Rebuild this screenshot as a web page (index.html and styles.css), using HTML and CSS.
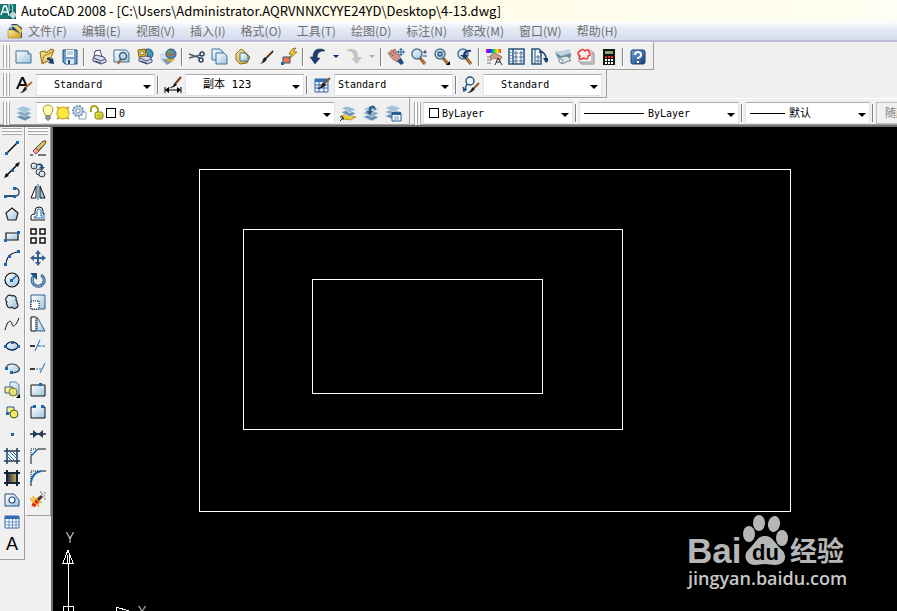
FILE: index.html
```html
<!DOCTYPE html>
<html lang="zh-CN">
<head>
<meta charset="utf-8">
<title>AutoCAD 2008</title>
<link rel="stylesheet" href="styles.css">
</head>
<body>
<svg class="defs" aria-hidden="true">
  <defs>
    <linearGradient id="paper" x1="0" y1="0" x2="1" y2="1"><stop offset="0" stop-color="#fff"/><stop offset="1" stop-color="#9cc4dc"/></linearGradient>
    <linearGradient id="blue" x1="0" y1="0" x2="1" y2="1"><stop offset="0" stop-color="#6fa4d8"/><stop offset="1" stop-color="#123f78"/></linearGradient>
    <linearGradient id="gold" x1="0" y1="0" x2="1" y2="1"><stop offset="0" stop-color="#fff0a0"/><stop offset="1" stop-color="#c79a1c"/></linearGradient>
    <linearGradient id="rainbow"><stop offset="0" stop-color="#f0f"/><stop offset=".25" stop-color="#22f"/><stop offset=".5" stop-color="#0c6"/><stop offset=".75" stop-color="#fe0"/><stop offset="1" stop-color="#f22"/></linearGradient>
    <linearGradient id="dusk"><stop offset="0" stop-color="#20264a"/><stop offset="1" stop-color="#c8b458"/></linearGradient>
    <g id="brush"><path d="M16 3 9 10" stroke="#3a2412" stroke-width="2"/><path d="M15 3 9 9" stroke="#c98a55"/><path d="M8 9 10 11Q8 15 3 16Q6 14 6 11Z" fill="#222"/></g>
    <g id="lens"><path d="M10 10 15 16" stroke="#8a5524" stroke-width="3"/><path d="M11 11 15 16" stroke="#d89a58"/><circle cx="7" cy="6" r="5" fill="url(#paper)" stroke="#54718c" stroke-width="1.5"/></g>
    <g id="printer"><path d="M4 9 5 3 10 2 12 9" fill="#fff" stroke="#444b70"/><path d="M3 10 6 7 14 9 16 12V14L11 16 3 13Z" fill="#d6daec" stroke="#444b70"/><path d="M4 10 11 13 15 11M5 13 11 15" fill="none" stroke="#444b70"/></g>
    <g id="globe"><circle cx="12" cy="6" r="5" fill="#3b8ed0" stroke="#245680"/><path d="M9 3Q12 1 13 4L11 6 12 9Q9 9 8 6ZM14 6 16 5 15 8Z" fill="#63b84c"/></g>
    <g id="stack"><path d="M1 13 8 10 17 13 10 17Z" fill="#6d8fae" stroke="#e8f0f6" stroke-width=".6"/><path d="M1 9 8 6 17 9 10 13Z" fill="#84a7c2" stroke="#e8f0f6" stroke-width=".6"/><path d="M1 5 8 2 17 5 10 9Z" fill="#a4c4da" stroke="#e8f0f6" stroke-width=".6"/></g>
    <g id="sheets"><path d="M1 1H9L12 4V12H1Z" fill="url(#paper)" stroke="#39759c"/></g>
    <g id="block"><path d="M6 0H12L15 3V13H6Z" fill="url(#paper)" stroke="#5d83a7"/><path d="M1 5H9V11H1Z" fill="#fff080" stroke="#2a5fa0"/><circle cx="9" cy="10" r="4" fill="#f4e860" fill-opacity=".8" stroke="#7b7630"/></g>
    <path id="down" d="M0 0H8L4 4Z"/>
  </defs>
</svg>
<div class="app">
  <header class="title">
    <svg class="logo" width="16" height="16" viewBox="0 0 16 16"><path d="M0 1H16V16H0Z" fill="#16766f"/><path d="M1 12 4 3H6L9 12M3 9H8" fill="none" stroke="#fff" stroke-width="1.500"/><path d="M9 1V9M11 1Q14 3 12 8" fill="none" stroke="#bfe4df"/><path d="M9 8H16V16H9Z" fill="#0d5d5c"/><path d="M8 12H16M13 8V16" stroke="#fff"/><path d="M11 10H15V14H11Z" fill="none" stroke="#fff"/></svg>
    <h1>AutoCAD 2008 - [C:\Users\Administrator.AQRVNNXCYYE24YD\Desktop\4-13.dwg]</h1>
  </header>
  <nav class="menu">
    <svg width="16" height="16" viewBox="0 0 16 16"><path d="M2 6 4 1H10L15 5V15H1Z" fill="#254a78"/><path d="M1 7 6 7 14 11V15H1Z" fill="url(#gold)" stroke="#a8801c" stroke-width=".6"/><path d="M6 3 10 2 15 7 14 11Z" fill="#f1cf50"/><path d="M1 3H8M4 0V6" stroke="#fff"/></svg>
    <a href="#">文件(F)</a><a href="#">编辑(E)</a><a href="#">视图(V)</a><a href="#">插入(I)</a><a href="#">格式(O)</a><a href="#">工具(T)</a><a href="#">绘图(D)</a><a href="#">标注(N)</a><a href="#">修改(M)</a><a href="#">窗口(W)</a><a href="#">帮助(H)</a>
  </nav>

  <div class="row">
    <div class="bar">
      <i class="grip"></i>
      <button aria-label="新建"><svg viewBox="0 0 18 18"><path d="M1 3H13L16 6V15H1Z" fill="url(#paper)" stroke="#3f7190"/><path d="M13 3V6H16" fill="#fff" stroke="#3f7190"/></svg></button>
      <button aria-label="打开"><svg viewBox="0 0 18 18"><path d="M2 4 7 3 8 5 13 1 16 2 12 12 4 16Z" fill="url(#gold)" stroke="#8f7020"/><path d="M6 8 15 4 12 12 4 15Z" fill="#f4d878" stroke="#a4842c"/><path d="M9 10Q12 8 13 11L15 10 16 16 10 15 12 13Q11 11 9 12Z" fill="#1d3d6c"/></svg></button>
      <button aria-label="保存"><svg viewBox="0 0 18 18"><path d="M2 2H16V16H4L2 14Z" fill="#6f9cc8" stroke="#234f7c"/><path d="M5 2H13V9H5Z" fill="#f4f8ff"/><path d="M6 4H12M6 6H12" stroke="#9ab"/><path d="M5 11H13V16H5Z" fill="#dce4ec"/><path d="M7 12H9V16H7Z" fill="#234f7c"/></svg></button>
      <i class="sep"></i>
      <button aria-label="打印"><svg viewBox="0 0 18 18"><use href="#printer"/></svg></button>
      <button aria-label="打印预览"><svg viewBox="0 0 18 18"><path d="M1 2H13L16 5V14H1Z" fill="url(#paper)" stroke="#3f7190"/><path d="M8 11 5 16" stroke="#a85c28" stroke-width="2"/><circle cx="10" cy="8" r="3.500" fill="#bddcf0" stroke="#40617e" stroke-width="1.500"/></svg></button>
      <button aria-label="发布"><svg viewBox="0 0 18 18"><use href="#globe"/><use href="#printer"/><path d="M2 2 9 1 10 8 3 9Z" fill="#f3c331" stroke="#845f12"/><circle cx="6" cy="5" r="2" fill="#fff3b0" stroke="#775"/></svg></button>
      <button aria-label="三维 DWF"><svg viewBox="0 0 18 18"><path d="M1 6 8 3 12 13 7 16 1 12Z" fill="#d4ddea"/><path d="M3 11 12 11 14 13 8 17Z" fill="#8296b0"/><use href="#globe"/><path d="M7 6Q12 8 17 6M12 1Q9 6 12 11" fill="none" stroke="#d44b32"/><path d="M8 11Q12 14 15 11" fill="none" stroke="#e5b425" stroke-width="2"/></svg></button>
      <i class="sep"></i>
      <button aria-label="剪切"><svg viewBox="0 0 18 18"><path d="M1 6 12 10M1 10 12 7" stroke="#506078" stroke-width="1.500"/><circle cx="14" cy="6" r="2" fill="none" stroke="#2b3d60" stroke-width="1.500"/><circle cx="13" cy="12" r="2" fill="none" stroke="#2b3d60" stroke-width="1.500"/></svg></button>
      <button aria-label="复制"><svg viewBox="0 0 18 18"><use href="#sheets"/><use href="#sheets" x="4" y="4"/></svg></button>
      <button aria-label="粘贴"><svg viewBox="0 0 18 18"><path d="M2 6 5 3 7 1 10 3 16 9 13 15 6 16 2 12Z" fill="url(#gold)" stroke="#8c701e"/><path d="M6 5H11L14 8V13H6Z" fill="url(#paper)" stroke="#456f92"/></svg></button>
      <button aria-label="特性匹配"><svg viewBox="0 0 18 18"><use href="#brush"/></svg></button>
      <button aria-label="块编辑器"><svg viewBox="0 0 18 18"><path d="M3 9H10V15H3Z" fill="#ef7d4c" stroke="#344c7b"/><path d="M12 1 16 0 13 4H17L9 11 12 6H9Z" fill="#ffd429" stroke="#73521a" stroke-width=".7"/><path d="M1 14H4V17H1Z" fill="#1769b0"/></svg></button>
      <i class="sep"></i>
      <button aria-label="放弃"><svg viewBox="0 0 18 18"><path d="M16 3Q8 2 8 10H11L6 16 1 9H4Q4 0 12 1Q15 1 16 3Z" fill="#1e3d6e" stroke="#132c50" stroke-width=".5"/></svg></button>
      <button class="drop" aria-label="放弃列表"><svg viewBox="0 0 8 4"><path d="M1 0H7L4 3Z" fill="#14148c"/></svg></button>
      <button aria-label="重做"><svg viewBox="0 0 18 18"><path d="M1 3Q9 2 9 10H6L12 16 17 9H13Q13 0 5 1Q2 1 1 3Z" fill="#c4c4c4"/></svg></button>
      <button class="drop" aria-label="重做列表"><svg viewBox="0 0 8 4"><path d="M1 0H7L4 3Z" fill="#aaaabc"/></svg></button>
      <i class="sep"></i>
      <button aria-label="实时平移"><svg viewBox="0 0 18 18"><path d="M1 5 2 4 6 8 3 3 5 2 8 6 6 2 8 1 11 7 12 6 14 12 10 14Q4 11 1 5Z" fill="#d19486" stroke="#93574d" stroke-width=".7"/><path d="M10 13 14 10 17 15 14 17Z" fill="#214d83"/><path d="M14 1V7M11 4H17" stroke="#2d639a"/><path d="M14 0 16 2H12ZM14 8 16 6H12ZM10 4 12 2V6ZM18 4 16 2V6Z" fill="#2d639a"/></svg></button>
      <button aria-label="实时缩放"><svg viewBox="0 0 18 18"><use href="#lens"/><path d="M13 4H17M15 2V6M13 8H17" stroke="#1c467a"/></svg></button>
      <button aria-label="窗口缩放"><svg viewBox="0 0 18 18"><use href="#lens"/><path d="M5 4H9V8H5Z" fill="#88b6dd" stroke="#163f70"/><path d="M17 13V17H13Z" fill="#000"/></svg></button>
      <button aria-label="缩放上一个"><svg viewBox="0 0 18 18"><use href="#lens"/><path d="M15 2Q8 1 7 7H4L9 11 12 7H10Q10 3 15 4Z" fill="#1d416e"/></svg></button>
      <i class="sep"></i>
      <button aria-label="特性"><svg viewBox="0 0 18 18"><path d="M1 1H16V5H1Z" fill="url(#rainbow)"/><path d="M5 8Q8 4 12 6L17 9 15 12 9 10 6 12Z" fill="#d4a08c" stroke="#844e42" stroke-width=".7"/><path d="M2 9H6M2 12H6M2 15H6" stroke="#777"/><path d="M10 17 13 10 17 17M11 14H16" fill="none" stroke="#333"/></svg></button>
      <button aria-label="设计中心"><svg viewBox="0 0 18 18"><path d="M1 1H16V16H1Z" fill="#eef4fa" stroke="#27537e" stroke-width="1.500"/><path d="M5 1V16" stroke="#27537e" stroke-width="1.500"/><path d="M3 4V5M3 7V8M3 10V11M3 13V14" stroke="#27537e"/><path d="M7 4H9V6H7ZM12 4H14V6H12ZM7 8H9V10H7ZM12 8H14V10H12ZM7 12H9V14H7ZM12 12H14V14H12Z" fill="#ffe48a" stroke="#52739b"/></svg></button>
      <button aria-label="工具选项板"><svg viewBox="0 0 18 18"><path d="M1 1H8L10 3V16H1Z" fill="#eef4fa" stroke="#27537e" stroke-width="1.500"/><path d="M4 1V16" stroke="#27537e"/><path d="M6 8H8V10H6ZM6 12H8V14H6Z" fill="#ffe48a" stroke="#52739b"/><path d="M8 4Q14 3 15 10" fill="none" stroke="#173c67" stroke-width="1.500"/><path d="M12 10H17V13L15 15Z" fill="#173c67"/></svg></button>
      <button aria-label="图纸集管理器"><svg viewBox="0 0 18 18"><path d="M1 3 8 3 16 1 17 14 8 13Z" fill="#bed5df"/><path d="M1 4 7 8 17 5V9L8 12 3 9Z" fill="#71909e"/><path d="M4 10 13 8 17 12 8 16Z" fill="#dbe5e8" stroke="#778c96"/><circle cx="7" cy="13" r="2" fill="#f0f5f7" stroke="#778c96"/></svg></button>
      <button aria-label="标记集管理器"><svg viewBox="0 0 18 18"><path d="M4 5H17V16H4Z" fill="#ddd" stroke="#888"/><path d="M2 3H15V14H2Z" fill="#f5f5f5" stroke="#999"/><path d="M3 3Q6 0 8 3Q12 0 12 4Q15 7 11 8Q11 13 7 10Q1 13 3 8Q-1 5 3 3Z" fill="#ffecec" stroke="#e83535" stroke-width="1.500"/></svg></button>
      <button aria-label="计算器"><svg viewBox="0 0 18 18"><path d="M3 1H15V17H3Z" fill="#101510"/><path d="M5 3H13V6H5Z" fill="#86a678"/><path d="M5 9H13" stroke="#e22" stroke-width="2" stroke-dasharray="2 1"/><path d="M5 12H13M5 15H13" stroke="#fff" stroke-width="2" stroke-dasharray="2 1"/></svg></button>
      <i class="sep"></i>
      <button aria-label="帮助"><svg viewBox="0 0 18 18"><rect x="2" y="2" width="14" height="14" rx="2" fill="url(#blue)" stroke="#123f78"/><path d="M6 7Q6 4 9 4T12 7Q12 9 9 10V11M9 13V15" fill="none" stroke="#fff" stroke-width="2"/></svg></button>
    </div>
  </div>

  <div class="row">
    <div class="bar">
      <i class="grip"></i>
      <button aria-label="文字样式"><svg viewBox="0 0 18 18"><path d="M2 13 7 2H8L12 11M4 9H10" fill="none" stroke="#111" stroke-width="2"/><path d="M17 6 10 12" stroke="#b36a38" stroke-width="2"/><path d="M10 11 12 13Q9 17 5 17Q8 15 9 12Z" fill="#222"/></svg></button>
      <div class="combo text-style"><select aria-label="文字样式"><option>Standard</option></select><svg><use href="#down"/></svg></div>
      <i class="sep"></i>
      <button aria-label="标注样式"><svg viewBox="0 0 18 18"><path d="M1 11V17M17 11V17M2 14H16" stroke="#000"/><path d="M1 14 5 11V17ZM17 14 13 11V17Z" fill="#000"/><path d="M17 1 11 8" stroke="#6b3e1d" stroke-width="2"/><path d="M11 7 13 9Q8 13 4 12Q9 11 10 8Z" fill="#111"/></svg></button>
      <div class="combo text-style cjk"><select aria-label="标注样式"><option>副本 123</option></select><svg><use href="#down"/></svg></div>
      <i class="sep"></i>
      <button aria-label="表格样式"><svg viewBox="0 0 18 18"><path d="M2 3H15V16H2Z" fill="#e9f1fb" stroke="#3968a7"/><path d="M2 3H15V6H2Z" fill="#356db7"/><path d="M2 9H15M2 12H15M6 6V16M11 6V16" stroke="#3968a7"/><path d="M17 2 11 8" stroke="#83512c" stroke-width="2"/><path d="M10 6 13 9Q9 13 4 13Q8 11 9 8Z" fill="#222"/></svg></button>
      <div class="combo"><select aria-label="表格样式"><option>Standard</option></select><svg><use href="#down"/></svg></div>
      <i class="sep"></i>
      <button aria-label="多重引线样式"><svg viewBox="0 0 18 18"><circle cx="8" cy="5" r="4" fill="#edf5fa" stroke="#26547f" stroke-width="1.500"/><path d="M5 8 2 15M1 11 2 15 5 13" fill="none" stroke="#26547f" stroke-width="1.500"/><path d="M17 7 12 12" stroke="#8b542c" stroke-width="2"/><path d="M11 11 13 13Q10 17 5 17Q9 15 10 12Z" fill="#222"/></svg></button>
      <div class="combo text-style"><select aria-label="多重引线样式"><option>Standard</option></select><svg><use href="#down"/></svg></div>
    </div>
  </div>

  <div class="row last">
    <div class="bar">
      <i class="grip"></i>
      <button aria-label="图层特性"><svg viewBox="0 0 18 18"><use href="#stack"/></svg></button>
      <div class="combo layers">
        <span class="states">
          <svg width="12" height="18" viewBox="0 0 12 18"><path d="M4 12Q1 8 1 6Q1 1 6 1T11 6Q11 8 8 12Z" fill="#fffbb0" stroke="#a39a35"/><path d="M4 12H8V15H4ZM5 16H7" fill="#aaa" stroke="#5c6475"/></svg>
          <svg width="16" height="18" viewBox="0 0 16 18"><path d="M2 3 5 5M14 3 11 5M2 15 5 13M14 15 11 13" stroke="#c89b20" stroke-width="2"/><circle cx="8" cy="9" r="6" fill="#ffe83a" stroke="#b7952b"/></svg>
          <svg width="16" height="18" viewBox="0 0 16 18"><path d="M7 8H14V15H7Z" fill="#fff" stroke="#8da0ba"/><circle cx="6" cy="7" r="5" fill="#c5d7e8" stroke="#7896b4" stroke-dasharray="2 1" stroke-width="2"/><circle cx="6" cy="7" r="2" fill="#fff" stroke="#7896b4"/></svg>
          <svg width="16" height="18" viewBox="0 0 16 18"><path d="M2 8V5Q2 2 5 2T9 5V10" fill="none" stroke="#a8a524" stroke-width="2"/><rect x="6" y="8" width="8" height="7" rx="2" fill="#e7e03b" stroke="#807e1c"/><path d="M8 11H13M8 13H13" stroke="#aaa525"/></svg>
          <b class="swatch"></b>
        </span>
        <select aria-label="图层"><option>0</option></select><svg class="arrow"><use href="#down"/></svg>
      </div>
      <button aria-label="将对象的图层置为当前"><svg viewBox="0 0 18 18"><path d="M2 12 8 10 17 13 11 16 5 15Z" fill="#f2cd25" stroke="#9b7b18" stroke-width=".7"/><path d="M2 8 8 6 17 9 11 13Z" fill="#6f91b0" stroke="#fff" stroke-width=".5"/><path d="M2 4 8 2 17 5 11 9Z" fill="#9bc0d4" stroke="#fff" stroke-width=".5"/><path d="M1 17 4 14M1 13H4V16" fill="none" stroke="#123"/></svg></button>
      <button aria-label="上一个图层"><svg viewBox="0 0 18 18"><use href="#stack"/><path d="M14 6Q13 0 9 2Q6 3 7 7H4L8 11 11 7H9Q9 4 11 4Q12 5 14 6Z" fill="#315b86"/></svg></button>
      <button aria-label="图层状态管理器"><svg viewBox="0 0 18 18"><use href="#stack" x="-1" y="-1"/><path d="M7 9H16V17H7Z" fill="#f7fbff" stroke="#245e98"/><path d="M7 8H16V11H7Z" fill="#245e98"/><path d="M9 13H14M9 15H14" stroke="#779cbd"/></svg></button>
    </div>
    <div class="bar open">
      <i class="grip"></i>
      <div class="combo color"><span class="states"><b class="swatch"></b></span><select aria-label="颜色"><option>ByLayer</option></select><svg class="arrow"><use href="#down"/></svg></div>
      <i class="sep"></i>
      <div class="combo linetype"><i class="stroke"></i><select aria-label="线型"><option>ByLayer</option></select><svg><use href="#down"/></svg></div>
      <i class="sep"></i>
      <div class="combo weight cjk"><i class="stroke"></i><select aria-label="线宽"><option>默认</option></select><svg><use href="#down"/></svg></div>
      <i class="sep"></i>
      <div class="combo plot cjk"><select aria-label="打印样式" disabled><option>随颜色</option></select></div>
    </div>
  </div>

  <main class="work">
    <aside class="side">
      <i class="grip"></i>
      <button aria-label="直线"><svg viewBox="0 0 16 16"><path d="M2 14 14 2" stroke="#000" stroke-width="1.500"/><path d="M1 12H4V15H1ZM12 1H15V4H12Z" fill="#1768b4"/></svg></button>
      <button aria-label="构造线"><svg viewBox="0 0 16 16"><path d="M2 14 14 2" stroke="#000" stroke-width="1.500"/><path d="M0 16 2 11 5 14ZM16 0 11 2 14 5Z" fill="#111"/><path d="M7 7H10V10H7Z" fill="#1768b4"/></svg></button>
      <button aria-label="多段线"><svg viewBox="0 0 16 16"><path d="M2 12H11" stroke="#111" stroke-width="1.500"/><path d="M10 4Q15 4 15 8T11 12" fill="none" stroke="#345774" stroke-width="1.500"/><path d="M0 11H3V14H0ZM9 11H12V14H9ZM9 3H12V6H9Z" fill="#1768b4"/></svg></button>
      <button aria-label="正多边形"><svg viewBox="0 0 16 16"><path d="M8 2 14 7 12 14H4L2 7Z" fill="url(#paper)" stroke="#222" stroke-width="1.200"/></svg></button>
      <button aria-label="矩形"><svg viewBox="0 0 16 16"><path d="M2 5H14V12H2Z" fill="url(#paper)" stroke="#111" stroke-width="1.200"/><path d="M0 11H3V14H0ZM13 3H16V6H13Z" fill="#1768b4"/></svg></button>
      <button aria-label="圆弧"><svg viewBox="0 0 16 16"><path d="M2 14Q3 3 14 2" fill="none" stroke="#223" stroke-width="1.200"/><path d="M0 13H3V16H0ZM4 5H7V8H4ZM13 0H16V3H13Z" fill="#1768b4"/></svg></button>
      <button aria-label="圆"><svg viewBox="0 0 16 16"><circle cx="8" cy="8" r="7" fill="url(#paper)" stroke="#111" stroke-width="1.200"/><path d="M8 8 13 3" stroke="#1768b4" stroke-width="1.500"/><path d="M6 7H9V10H6Z" fill="#1768b4"/></svg></button>
      <button aria-label="修订云线"><svg viewBox="0 0 16 16"><path d="M3 8A3 3 0 0 1 3 3A3 3 0 0 1 8 2A3 3 0 0 1 12 6A3 3 0 0 1 13 9A3 3 0 0 1 12 14A3 3 0 0 1 8 13A3 3 0 0 1 3 11A2 2 0 0 1 3 8Z" fill="url(#paper)" stroke="#223" stroke-width="1.200"/></svg></button>
      <button aria-label="样条曲线"><svg viewBox="0 0 16 16"><path d="M1 14C4 3 7 4 8 8S12 10 15 2" fill="none" stroke="#111"/></svg></button>
      <button aria-label="椭圆"><svg viewBox="0 0 16 16"><ellipse cx="8" cy="8" rx="6" ry="4" fill="url(#paper)" stroke="#111" stroke-width="1.200"/><path d="M0 7H3V10H0ZM13 7H16V10H13ZM7 3H10V6H7ZM7 11H10V13H7Z" fill="#1768b4"/></svg></button>
      <button aria-label="椭圆弧"><svg viewBox="0 0 16 16"><path d="M2 8Q3 4 8 4T15 8 8 13" fill="url(#paper)" stroke="#345" stroke-width="1.200"/><path d="M1 7H4V10H1ZM6 11H9V14H6Z" fill="#1768b4"/></svg></button>
      <button aria-label="插入块"><svg viewBox="0 0 16 16"><use href="#block"/><path d="M16 12V16H12Z"/></svg></button>
      <button aria-label="创建块"><svg viewBox="0 0 16 16"><path d="M3 3H10V9H3Z" fill="#fff080" stroke="#205a9c"/><circle cx="10" cy="10" r="4" fill="#f4e860" stroke="#555426"/><path d="M2 8H5V11H2Z" fill="#1768b4"/></svg></button>
      <button aria-label="点"><svg viewBox="0 0 16 16"><path d="M7 7H10V10H7Z" fill="#1768b4"/></svg></button>
      <button aria-label="图案填充"><svg viewBox="0 0 16 16"><path d="M3 3H13V13H3Z" fill="#fff"/><path d="M4 6 10 12M4 9 8 13M6 4 12 10M9 4 13 8" stroke="#267ab6"/><path d="M0 3H16M0 13H16M3 0V16M13 0V16" stroke="#203b59" stroke-width="1.500"/></svg></button>
      <button aria-label="渐变色"><svg viewBox="0 0 16 16"><path d="M3 3H13V13H3Z" fill="url(#dusk)"/><path d="M0 3H16M0 13H16M3 0V16M13 0V16" stroke="#182536" stroke-width="2"/></svg></button>
      <button aria-label="面域"><svg viewBox="0 0 16 16"><path d="M1 2H10L15 8V14H1Z" fill="url(#paper)" stroke="#244f80"/><circle cx="8" cy="8" r="3" fill="#fff" stroke="#244f80" stroke-width="1.200"/></svg></button>
      <button aria-label="表格"><svg viewBox="0 0 16 16"><path d="M1 2H15V14H1Z" fill="#fff" stroke="#3968a7"/><path d="M1 2H15V5H1Z" fill="#376cb2"/><path d="M1 8H15M1 11H15M5 5V14M8.500 5V14M12 5V14" stroke="#6a91c4"/></svg></button>
      <button class="letter" aria-label="多行文字">A</button>
    </aside>
    <aside class="side">
      <i class="grip"></i>
      <button aria-label="删除"><svg viewBox="0 0 16 16"><path d="M6 8 13 1 16 1 15 4 9 11Z" fill="#e7c04b" stroke="#665321"/><path d="M6 8 13 1M8 11 15 4" stroke="#275b93"/><path d="M3 11 6 8 9 11 6 14Z" fill="#f0a39a" stroke="#9b413c"/><path d="M0 15H3M8 15H16" stroke="#000"/></svg></button>
      <button aria-label="复制对象"><svg viewBox="0 0 16 16"><circle cx="4" cy="4" r="3" fill="url(#paper)" stroke="#333"/><circle cx="9" cy="10" r="3" fill="url(#paper)" stroke="#333"/><circle cx="12" cy="12" r="3" fill="url(#paper)" stroke="#333"/><path d="M7 2Q13 0 13 5H15L12 8 9 5H11Q11 3 7 3Z" fill="#174d86"/></svg></button>
      <button aria-label="镜像"><svg viewBox="0 0 16 16"><path d="M6 2V14H1Z" fill="#fff" stroke="#111"/><path d="M10 2V14H15Z" fill="#9cc" stroke="#111"/><path d="M8 0V16" stroke="#1768b4"/></svg></button>
      <button aria-label="偏移"><svg viewBox="0 0 16 16"><path d="M15 14H1V10Q1 8 5 8V5Q5 1 9 1T13 5V8H15" fill="#fff" stroke="#111"/><path d="M15 12H4Q4 10 7 10V5Q7 3 9 3T11 5V10H15" fill="none" stroke="#1768b4"/></svg></button>
      <button aria-label="阵列"><svg viewBox="0 0 16 16"><path d="M1 1H6V6H1ZM10 1H15V6H10ZM1 10H6V15H1ZM10 10H15V15H10Z" fill="#fff" stroke="#111" stroke-width="1.500"/></svg></button>
      <button aria-label="移动"><svg viewBox="0 0 16 16"><path d="M8 2V14M2 8H14" stroke="#315f91" stroke-width="2"/><path d="M8 0 11 4H5ZM8 16 11 12H5ZM0 8 4 5V11ZM16 8 12 5V11Z" fill="#315f91"/></svg></button>
      <button aria-label="旋转"><svg viewBox="0 0 16 16"><path d="M4 4A6 6 0 1 0 11 3" fill="none" stroke="#315f91" stroke-width="3"/><path d="M4 4A6 6 0 1 0 11 3" fill="none" stroke="#9dbbd6"/><path d="M0 1H7V8Z" fill="#244f7c"/></svg></button>
      <button aria-label="缩放"><svg viewBox="0 0 16 16"><path d="M1 1H15V15H1Z" fill="url(#paper)" stroke="#2c5f96"/><path d="M1 7H9V15H1Z" fill="#fff" stroke="#000" stroke-dasharray="1 1"/></svg></button>
      <button aria-label="拉伸"><svg viewBox="0 0 16 16"><path d="M7 1 15 15H7Z" fill="url(#paper)" stroke="#2c5f96"/><path d="M1 1H6V15H1Z" fill="#fff" stroke="#000"/><path d="M6 1V15" stroke="#fff" stroke-dasharray="1 1"/></svg></button>
      <button aria-label="修剪"><svg viewBox="0 0 16 16"><path d="M0 8H5" stroke="#000" stroke-width="1.500"/><path d="M5 13 10 2" stroke="#1768b4"/><path d="M8 8H16" stroke="#1768b4" stroke-dasharray="3 1"/></svg></button>
      <button aria-label="延伸"><svg viewBox="0 0 16 16"><path d="M0 9H5" stroke="#000" stroke-width="1.500"/><path d="M6 9H11" stroke="#1768b4" stroke-dasharray="2 1"/><path d="M10 13 15 3" stroke="#1768b4"/></svg></button>
      <button aria-label="打断于点"><svg viewBox="0 0 16 16"><path d="M1 3H15V14H1Z" fill="url(#paper)" stroke="#111"/><path d="M9 1H12V4H9Z" fill="#1768b4"/></svg></button>
      <button aria-label="打断"><svg viewBox="0 0 16 16"><path d="M1 3H15V14H1Z" fill="url(#paper)"/><path d="M3 3H1V14H15V3H13" fill="none" stroke="#111"/><path d="M3 1H6V4H3ZM11 1H14V4H11Z" fill="#1768b4"/></svg></button>
      <button aria-label="合并"><svg viewBox="0 0 16 16"><path d="M0 8H16" stroke="#223" stroke-width="1.500"/><path d="M3 4 8 8 3 12ZM13 4 8 8 13 12Z" fill="#1d3d59"/></svg></button>
      <button aria-label="倒角"><svg viewBox="0 0 16 16"><path d="M1 16V8M8 1H16" stroke="#111"/><path d="M1 8 8 1" stroke="#1768b4" stroke-width="1.500"/><path d="M1 7V1H7" fill="none" stroke="#000" stroke-dasharray="1 1"/></svg></button>
      <button aria-label="圆角"><svg viewBox="0 0 16 16"><path d="M1 16V12M11 1H16" stroke="#111"/><path d="M1 12Q2 3 11 1" fill="none" stroke="#1768b4" stroke-width="2"/><path d="M1 9V1H9" fill="none" stroke="#000" stroke-dasharray="1 1"/></svg></button>
      <button aria-label="分解"><svg viewBox="0 0 16 16"><path d="M0 6 3 8 3 4 6 7 9 4 8 8 12 10 8 11 9 15 5 12 2 15 3 11Z" fill="#ffd62e" stroke="#d98b22" stroke-width=".6"/><path d="M3 14 8 8" stroke="#d92424" stroke-width="4" stroke-dasharray="3 1"/><path d="M8 8 12 4" stroke="#413138" stroke-width="3"/><path d="M11 2H13M14 1H16M13 4H15M15 6V8M10 0H12" stroke="#777"/></svg></button>
    </aside>
    <section class="canvas">
      <svg class="drawing" width="100%" height="100%">
        <g fill="none" stroke="#fff" shape-rendering="crispEdges">
          <rect x="146" y="42" width="591" height="342"/>
          <rect x="190" y="102" width="379" height="200"/>
          <rect x="259" y="152" width="230" height="114"/>
          <path d="M15 436V490M10 479H20V490H10Z"/>
          <path d="M10 436 15 423 20 436ZM14 436V428M16 436V428"/>
          <path d="M63 480V490M63 480 76 484"/>
        </g>
        <text class="axis" x="13" y="416">Y</text>
        <text class="axis" x="85" y="490">X</text>
        <g fill="#b6b6b6">
          <text class="mark" x="634" y="436">Bai</text>
          <ellipse cx="696" cy="407" rx="6" ry="8"/>
          <ellipse cx="706" cy="396" rx="6" ry="8"/>
          <ellipse cx="721" cy="397" rx="6" ry="8" transform="rotate(10 721 397)"/>
          <ellipse cx="729" cy="411" rx="6" ry="8"/>
          <path d="M712 409C704 409 702 417 696 422C689 428 693 438 702 438L712 437L722 438C733 438 735 428 728 422C722 417 720 409 712 409Z"/>
          <text class="du" x="699" y="433">du</text>
          <text class="exp" x="737" y="434">经验</text>
          <text class="url" x="635" y="458">jingyan.baidu.com</text>
        </g>
      </svg>
    </section>
  </main>
</div>
</body>
</html>
```

FILE: styles.css
```css
* { box-sizing: border-box; }

body {
  margin: 0;
  background: #f0f0f0;
  color: #000;
  font: 12px "Open Sans", "Noto Sans CJK SC", sans-serif;
}

.defs { position: absolute; width: 0; height: 0; }

.app {
  display: flex;
  flex-direction: column;
  height: 100vh;
  overflow: hidden;
}

.title {
  display: flex;
  align-items: center;
  gap: 5px;
  height: 21px;
  background: linear-gradient(90deg, #fff, #fffbe6 40%, #fffef2);
  flex: none;
}

.title h1 {
  margin: 0;
  font: 400 13px/20px "Noto Sans CJK SC", sans-serif;
  white-space: nowrap;
}

.menu {
  display: flex;
  align-items: center;
  gap: 15px;
  height: 21px;
  padding-left: 7px;
  background: linear-gradient(#fff, #e4e9f5 45%, #d4dbed);
  border-bottom: 2px solid #b9bdd6;
  flex: none;
}

.menu svg { margin-right: -10px; }

.menu a {
  color: #707070;
  text-decoration: none;
  font: 12px/18px "Noto Sans CJK SC", sans-serif;
  white-space: nowrap;
}

.row {
  display: flex;
  height: 28px;
  flex: none;
}

.row.last {
  height: 29px;
  border-bottom: 2px solid #707070;
}

.bar {
  display: flex;
  align-items: center;
  padding: 2px 4px 0 0;
  border: solid #a0a0a0;
  border-width: 0 1px 1px 0;
  box-shadow: inset 0 1px #fff;
  flex: none;
}

.last .bar { padding-top: 4px; }
.bar + .bar { margin-left: 1px; }
.bar.open { border-right: 0; flex: 1 0 0; min-width: 0; }

.grip {
  width: 7px;
  height: 23px;
  margin: 0 2px 0 3px;
  border: solid #a6a6a6;
  border-width: 0 1px;
  background: linear-gradient(90deg, #fff 2px, #a6a6a6 2px 3px, #f0f0f0 3px 4px, #fff 4px);
  flex: none;
}

.sep {
  width: 2px;
  height: 18px;
  margin: 0 2px;
  border-left: 1px solid #808080;
  border-right: 1px solid #fff;
  flex: none;
}

button {
  display: flex;
  align-items: center;
  justify-content: center;
  width: 23px;
  height: 22px;
  padding: 0;
  border: 0;
  background: none;
  color: #000;
  flex: none;
}

.bar button svg { width: 18px; height: 18px; overflow: visible; }
.bar .drop { width: 13px; }
.bar .drop svg { width: 8px; height: 4px; }

.combo {
  position: relative;
  display: flex;
  align-items: center;
  width: 119px;
  height: 22px;
  margin-left: 1px;
  background: #fff;
  border: 1px solid #e0e3ea;
  border-top-color: #abadb3;
  flex: none;
}

.combo select {
  appearance: none;
  width: 100%;
  min-width: 0;
  height: 20px;
  padding: 0 18px 0 3px;
  border: 0;
  background: none;
  color: #000;
  font: 10px "DejaVu Sans Mono", "Noto Sans CJK SC", monospace;
}

.combo.cjk select { font-size: 11px; }
.combo.text-style select { padding-left: 17px; }

.combo > svg {
  position: absolute;
  right: 3px;
  top: 10px;
  width: 8px;
  height: 4px;
  pointer-events: none;
}

.layers { width: 299px; }
.layers + button { margin-left: 1px; }
.color { width: 150px; margin-left: 0; }
.linetype { width: 160px; margin-left: 0; }
.weight { width: 125px; margin-left: 0; }
.plot { width: 120px; margin-left: 0; background: #f0f0f0; border-color: #c0c0c0; }
.plot select { padding-left: 8px; color: #808080; opacity: 1; }

.states { display: flex; align-items: center; gap: 1px; padding-left: 5px; }

.swatch {
  width: 10px;
  height: 10px;
  border: 1px solid #000;
  background: #fff;
  flex: none;
}

.stroke {
  width: 60px;
  height: 1px;
  margin: 0 1px 0 4px;
  background: #000;
  flex: none;
}

.weight .stroke { width: 35px; }

.work { display: flex; flex: 1; min-height: 0; }

.side {
  display: flex;
  flex-direction: column;
  align-items: center;
  align-self: flex-start;
  width: 25px;
  padding-bottom: 4px;
  border: solid #a0a0a0;
  border-width: 0 1px 1px 0;
  flex: none;
}

.side + .side { width: 26px; border-left: 1px solid #fff; }

.side .grip {
  width: 20px;
  height: 7px;
  margin: 1px 0 2px;
  border-width: 1px 0;
  background: linear-gradient(#fff 2px, #a6a6a6 2px 3px, #f0f0f0 3px 4px, #fff 4px);
}

.side svg { width: 16px; height: 16px; overflow: visible; }
.letter { font: 18px "Liberation Sans", sans-serif; }

.canvas {
  flex: 1;
  min-width: 0;
  overflow: hidden;
  background: #000;
  border-left: 2px solid #707070;
}

.drawing { display: block; }
.axis { fill: #fff; font: 300 15px "Open Sans", sans-serif; }
.mark { font: bold 35px "Liberation Sans", sans-serif; }
.du { fill: #000; font: bold 22px "Liberation Sans", sans-serif; }
.exp { font: bold 27px "Noto Sans CJK SC", sans-serif; }
.url { font: 600 18px "Open Sans", sans-serif; fill: #c8c8c8; }
```
